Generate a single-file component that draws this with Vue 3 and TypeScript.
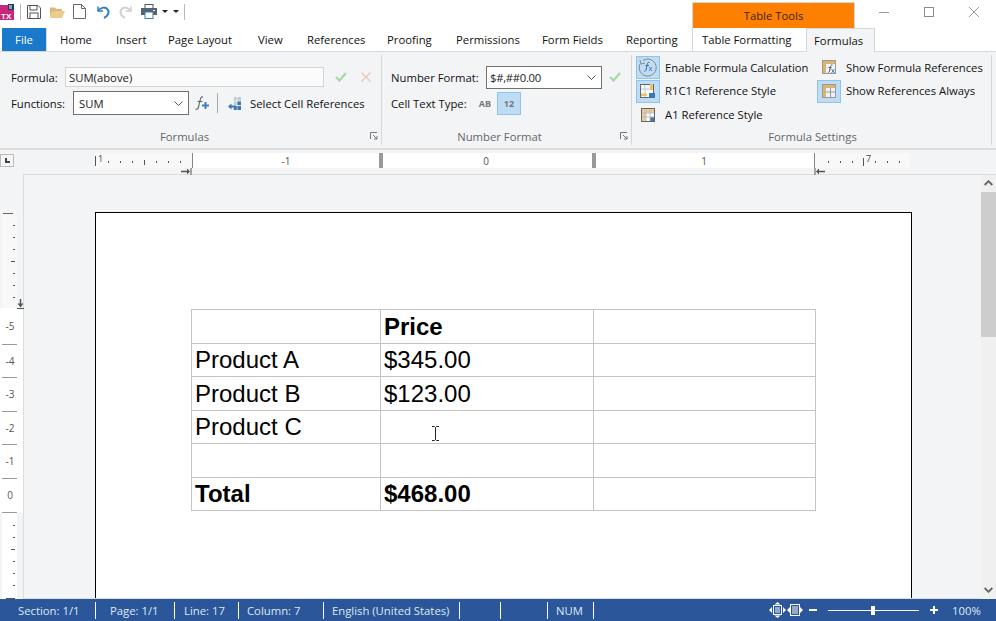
<script setup lang="ts">
const tabs = [
  { label: 'Home', w: 56 }, { label: 'Insert', w: 52 }, { label: 'Page Layout', w: 90 },
  { label: 'View', w: 49 }, { label: 'References', w: 80 }, { label: 'Proofing', w: 69 },
  { label: 'Permissions', w: 86 }, { label: 'Form Fields', w: 84 }, { label: 'Reporting', w: 78 },
]
const rows = [
  { a: '', b: 'Price', bold: true },
  { a: 'Product A', b: '$345.00', bold: false },
  { a: 'Product B', b: '$123.00', bold: false },
  { a: 'Product C', b: '', bold: false },
  { a: '', b: '', bold: false },
  { a: 'Total', b: '$468.00', bold: true },
]
const hTicks = [
  { x: 13, h: 2 }, { x: 25, h: 2 }, { x: 37, h: 2 }, { x: 49, h: 5 }, { x: 61, h: 2 }, { x: 73, h: 2 }, { x: 85, h: 2 },
]
const hTicksR = [
  { x: 13, h: 2 }, { x: 25, h: 2 }, { x: 37, h: 2 }, { x: 48, h: 8 }, { x: 60, h: 2 }, { x: 72, h: 2 }, { x: 84, h: 2 },
]
const vTop = [12, 24, 36, 48, 60, 72, 84]
const vBottom = [12, 24, 36, 48, 60, 72, 85]
const vNums = [
  { n: '-5', h: 37 }, { n: '-4', h: 33 }, { n: '-3', h: 34 }, { n: '-2', h: 33 }, { n: '-1', h: 34 }, { n: '0', h: 34 },
]
const status = [
  { t: 'Section: 1/1', w: 96, p: 18 }, { t: 'Page: 1/1', w: 79, p: 14 }, { t: 'Line: 17', w: 64, p: 9 },
  { t: 'Column: 7', w: 85, p: 8 }, { t: 'English (United States)', w: 136, p: 8 }, { t: '', w: 41, p: 0 },
  { t: '', w: 47, p: 0 }, { t: 'NUM', w: 46, p: 8 },
]
</script>

<template>
  <div class="app">
    <header class="titlebar">
      <div class="qat">
        <svg class="logo" width="14" height="16" viewBox="0 0 14 16">
          <path d="M0 1h9v2h5v13H0z" fill="#c8287a" />
          <rect x="8" y="0" width="6" height="6" fill="#1f3f6b" />
          <path d="M9 2h3M9 4h3" stroke="#fff" stroke-width="1" />
          <text x="1" y="14.500" font-size="8" font-weight="700" fill="#fff" font-family="Liberation Sans, sans-serif">TX</text>
        </svg>
        <span class="qsep first"></span>
        <svg width="14" height="14" viewBox="0 0 14 14" class="qi i-save"><path d="M.5.5h10.500l2.500 2.500v10.500H.5z" fill="none" stroke="#555" /><path d="M3 1v4h7V1" fill="none" stroke="#555" /><rect x="3" y="8" width="8" height="5.500" fill="none" stroke="#555" /></svg>
        <svg width="15" height="12" viewBox="0 0 15 12" class="qi i-open"><path d="M0 1.500h5l1 1.500h6v2H3L0 11z" fill="#d8b878" /><path d="M3 5h12l-3 7H0z" fill="#eccb8e" /></svg>
        <svg width="13" height="15" viewBox="0 0 13 15" class="qi i-new"><path d="M.5.500h8l4 4v10H.5zM8.500.500v4h4" fill="#fff" stroke="#666" /></svg>
        <svg width="14" height="14" viewBox="0 0 14 14" class="qi i-undo"><path d="M2 1.500v4.500h5" fill="none" stroke="#2e7fc4" stroke-width="1.500" /><path d="M2.500 5.500C5 2 10 1.500 12 5c1.500 3-.5 6.500-4 8" fill="none" stroke="#2e7fc4" stroke-width="2" /></svg>
        <svg width="14" height="14" viewBox="0 0 14 14" class="qi i-redo"><path d="M12 1.500v4.500h-5" fill="none" stroke="#cfcfcf" stroke-width="1.500" /><path d="M11.500 5.500C9 2 4 1.500 2 5c-1.500 3 .5 6.500 4 8" fill="none" stroke="#cfcfcf" stroke-width="2" /></svg>
        <svg width="16" height="15" viewBox="0 0 16 15" class="qi i-print"><rect x="4" y=".5" width="8" height="4" fill="#fff" stroke="#555" /><rect x="0" y="4" width="16" height="7" fill="#55626f" /><rect x="4" y="8" width="8" height="6.500" fill="#fff" stroke="#3b7db8" /><rect x="12" y="6" width="2" height="1" fill="#fff" /></svg>
        <span class="caret"></span>
        <span class="caret"></span>
        <span class="qsep"></span>
      </div>
      <div class="context">Table Tools</div>
      <div class="winbtns">
        <svg width="10" height="10" viewBox="0 0 10 10"><path d="M0 5.500h10" stroke="#9a9a9a" /></svg>
        <svg width="10" height="10" viewBox="0 0 10 10"><rect x=".5" y=".5" width="9" height="9" fill="none" stroke="#8c8c8c" /></svg>
        <svg width="10" height="10" viewBox="0 0 10 10"><path d="M0 0l10 10M10 0L0 10" stroke="#9a9a9a" /></svg>
      </div>
    </header>

    <nav class="tabs">
      <div class="tab file">File</div>
      <div v-for="t in tabs" :key="t.label" class="tab" :style="{ width: t.w + 'px' }">{{ t.label }}</div>
      <div class="tab ctx">Table Formatting</div>
      <div class="tab active">Formulas</div>
    </nav>

    <section class="ribbon">
      <div class="group g1">
        <div class="gbody">
          <div class="grow r1">
            <span class="lbl l-formula">Formula:</span>
            <div class="fbox"><span>SUM(above)</span></div>
            <svg class="ok" width="12" height="10" viewBox="0 0 12 10"><path d="M1 5l3.500 3.500L11 1" fill="none" stroke="#a8d8a8" stroke-width="2.200" /></svg>
            <svg class="no" width="10" height="10" viewBox="0 0 10 10"><path d="M.5.500l9 9M9.500.500l-9 9" stroke="#eec4b4" stroke-width="1.300" /></svg>
          </div>
          <div class="grow r2">
            <span class="lbl l-func">Functions:</span>
            <div class="combo c-func"><span>SUM</span>
              <svg width="9" height="5" viewBox="0 0 9 5"><path d="M.5.500l4 4 4-4" fill="none" stroke="#555" /></svg>
            </div>
            <svg class="fplus" width="15" height="14" viewBox="0 0 15 14">
              <path d="M8 1C6 .5 5.500 2 5 5L3.500 11C3 13 2 13.500 .5 13M2.500 5.500h5" fill="none" stroke="#666" stroke-width="1.100" />
              <path d="M7 9.500h7M10.500 6v7" stroke="#3d7fc0" stroke-width="2" />
            </svg>
            <span class="vsep"></span>
            <svg class="cellref" width="13" height="13" viewBox="0 0 13 13">
              <rect x="5" y="0" width="8" height="13" fill="#c3cad2" />
              <path d="M5.500 0v13M9 0v13M5 4h8M5 8.500h8" stroke="#f3f4f6" stroke-width=".8" />
              <path d="M9.500 4.500h3.500v3.500H9.500zM5.800 8.900h3v4h-3zM9.500 8.900H13v4H9.500z" fill="#3d78b5" />
              <path d="M2 9.500h6" stroke="#3d78b5" stroke-width="2" /><path d="M3.500 6.500v6L0 9.500z" fill="#3d78b5" />
            </svg>
            <span class="lbl l-sel">Select Cell References</span>
          </div>
        </div>
        <div class="gtitle">Formulas
          <svg class="launch" width="8" height="8" viewBox="0 0 8 8"><path d="M.5 7V.5H7M3 3l4 4M7 4v3H4" fill="none" stroke="#777" /></svg>
        </div>
      </div>

      <div class="group g2">
        <div class="gbody">
          <div class="grow r1">
            <span class="lbl l-num">Number Format:</span>
            <div class="combo c-num"><span>$#,##0.00</span>
              <svg width="9" height="5" viewBox="0 0 9 5"><path d="M.5.500l4 4 4-4" fill="none" stroke="#555" /></svg>
            </div>
            <svg class="ok2" width="12" height="10" viewBox="0 0 12 10"><path d="M1 5l3.500 3.500L11 1" fill="none" stroke="#a8d8a8" stroke-width="2.200" /></svg>
          </div>
          <div class="grow r2">
            <span class="lbl l-cell">Cell Text Type:</span>
            <span class="ttype ab">AB</span>
            <span class="ttype on">12</span>
          </div>
        </div>
        <div class="gtitle">Number Format
          <svg class="launch" width="8" height="8" viewBox="0 0 8 8"><path d="M.5 7V.5H7M3 3l4 4M7 4v3H4" fill="none" stroke="#777" /></svg>
        </div>
      </div>

      <div class="group g3">
        <div class="sets">
          <div class="setcol one">
            <div class="setrow">
              <span class="ibtn on">
                <svg width="20" height="20" viewBox="0 0 20 20"><path d="M5 3.500A8.500 8.500 0 1 1 2 7" fill="none" stroke="#888" /><path d="M2 3l1 4 4-1" fill="none" stroke="#888" /><path d="M11.500 5.500C10 5 9.500 6 9 8l-1 5c-.3 1-1 1.500-1.800 1.200M7.500 8.500h3.500" fill="none" stroke="#4a6a8a" /><path d="M11 10l3 4M14 10l-3 4" stroke="#3d85c6" /></svg>
              </span>
              <span class="lbl">Enable Formula Calculation</span>
            </div>
            <div class="setrow">
              <span class="ibtn on">
                <svg width="16" height="16" viewBox="0 0 16 16"><rect x=".5" y="1.500" width="13" height="13" fill="#f8f8f8" stroke="#666" /><path d="M5 2v12M1 6h12" stroke="#c8c8c8" /><rect x="9" y="10" width="6" height="5" fill="#3d78b5" /><path d="M1 10.500h6v2.500H1zM10 1h3v6h-3z" fill="#ecc370" /></svg>
              </span>
              <span class="lbl">R1C1 Reference Style</span>
            </div>
            <div class="setrow">
              <span class="ibtn">
                <svg width="14" height="14" viewBox="0 0 14 14"><rect x=".5" y=".5" width="13" height="13" fill="#fff" stroke="#666" /><path d="M1 1h4v4H1zM5 1h4v4H5zM9 1h4v4H9zM1 5h4v4H1zM1 9h4v4H1z" fill="#e8cd96" /><rect x="9" y="9" width="4" height="4" fill="#3d78b5" /><path d="M5 1v12M9 1v12M1 5h12M1 9h12" stroke="#bbb" /></svg>
              </span>
              <span class="lbl">A1 Reference Style</span>
            </div>
          </div>
          <div class="setcol">
            <div class="setrow">
              <span class="ibtn">
                <svg width="14" height="14" viewBox="0 0 14 14"><rect x=".5" y=".5" width="13" height="13" fill="#f4f4f4" stroke="#999" /><path d="M1 1h12v3H1zM1 1h3v12H1z" fill="#d9b56e" /><path d="M10.500 5C9 4.700 8.500 6 8.200 8l-.6 3c-.2 1-.8 1.500-1.600 1.300M6.500 7.500h3" fill="none" stroke="#555" /><path d="M9.500 9l3 4M12.500 9l-3 4" stroke="#3d85c6" /></svg>
              </span>
              <span class="lbl">Show Formula References</span>
            </div>
            <div class="setrow">
              <span class="ibtn on">
                <svg width="14" height="14" viewBox="0 0 14 14"><rect x=".5" y=".5" width="13" height="13" fill="#eef3f8" stroke="#999" /><path d="M1 1h12v3H1zM1 1h3v12H1z" fill="#d9b56e" /><path d="M4 8h9M8.500 4v9" stroke="#999" /></svg>
              </span>
              <span class="lbl">Show References Always</span>
            </div>
          </div>
        </div>
        <div class="gtitle">Formula Settings</div>
      </div>
    </section>

    <div class="hruler">
      <span class="corner"><i></i></span>
      <div class="hband">
        <div class="hmargin left">
          <b class="hbar"></b><em class="num1">1</em>
          <i v-for="t in hTicks" :key="t.x" :style="{ left: t.x + 'px', height: t.h + 'px', top: (9 - t.h / 2) + 'px' }"></i>
        </div>
        <div class="hcell c1"><span>-1</span></div>
        <div class="hcell c2"><span>0</span></div>
        <div class="hcell c3"><span>1</span></div>
        <div class="hmargin right">
          <em class="num7">7</em>
          <i v-for="t in hTicksR" :key="t.x" :style="{ left: t.x + 'px', height: t.h + 'px', top: (9 - t.h / 2) + 'px' }"></i>
        </div>
        <svg class="indent il" width="11" height="7" viewBox="0 0 11 7"><path d="M0 3.500h8" stroke="#555" stroke-width="1.500" /><path d="M6 .5l3 3-3 3z" fill="#555" /><path d="M10 0v7" stroke="#555" /></svg>
        <svg class="indent ir" width="11" height="7" viewBox="0 0 11 7"><path d="M11 3.500H3" stroke="#555" stroke-width="1.500" /><path d="M5 .5l-3 3 3 3z" fill="#555" /><path d="M1 0v7" stroke="#555" /></svg>
      </div>
    </div>

    <main class="work">
      <aside class="vruler">
        <div class="vband top">
          <i class="vlong first"></i>
          <i v-for="(y, n) in vTop" :key="y" :class="{ mid: n === 3 }" :style="{ top: y + 'px' }"></i>
          <svg class="vmark" width="7" height="10" viewBox="0 0 7 10"><path d="M3.500 0v6" stroke="#555" stroke-width="1.500" /><path d="M.5 4.500h6l-3 4z" fill="#555" /><path d="M0 9.500h7" stroke="#555" /></svg>
        </div>
        <div class="vnums">
          <div v-for="v in vNums" :key="v.n" class="vnum" :style="{ height: v.h + 'px' }"><span>{{ v.n }}</span></div>
        </div>
        <div class="vband bottom">
          <i v-for="(y, n) in vBottom" :key="y" :class="{ mid: n === 2, last: n === 6 }" :style="{ top: y + 'px' }"></i>
        </div>
      </aside>

      <div class="canvas">
        <div class="page">
          <table class="doc">
            <colgroup><col class="col1" /><col class="col2" /><col class="col3" /></colgroup>
            <tbody>
              <tr v-for="(r, i) in rows" :key="i" :class="{ bold: r.bold }">
                <td>{{ r.a }}</td><td>{{ r.b }}</td><td></td>
              </tr>
            </tbody>
          </table>
          <svg class="ibeam" width="7" height="15" viewBox="0 0 7 15"><path d="M0 .5h2.500l1 1 1-1H7M3.500 1.500v12M0 14.500h2.500l1-1 1 1H7" fill="none" stroke="#222" /></svg>
        </div>
      </div>

      <div class="scroll">
        <svg width="9" height="6" viewBox="0 0 9 6" class="arrow up"><path d="M.7 5L4.500 1.200 8.300 5" fill="none" stroke="#606060" stroke-width="1.800" /></svg>
        <div class="track"><div class="thumb"></div></div>
        <svg width="9" height="6" viewBox="0 0 9 6" class="arrow"><path d="M.7 1L4.500 4.800 8.300 1" fill="none" stroke="#606060" stroke-width="1.800" /></svg>
      </div>
    </main>

    <footer class="status">
      <div v-for="(s, i) in status" :key="i" class="sitem" :style="{ width: s.w + 'px', paddingLeft: s.p + 'px' }">{{ s.t }}</div>
      <div class="sright">
        <svg width="17" height="16" viewBox="0 0 17 16"><path d="M0 8l3-3v6zM17 8l-3-3v6zM8.500 0l3 2.500h-6zM8.500 16l3-2.500h-6z" fill="#fff" /><rect x="4.500" y="3.500" width="8" height="9" fill="none" stroke="#fff" /><path d="M6 6h5M6 8h5M6 10h5" stroke="#fff" /></svg>
        <svg class="z2" width="16" height="12" viewBox="0 0 16 12"><path d="M0 6l3-3v6zM16 6l-3-3v6z" fill="#fff" /><rect x="3.500" y=".5" width="9" height="11" fill="none" stroke="#fff" /><path d="M5 3h6M5 5h6M5 7h6M5 9h6" stroke="#fff" /></svg>
        <span class="zminus"></span>
        <div class="zslider"><span class="zthumb"></span></div>
        <span class="zplus"></span>
        <span class="zpct">100%</span>
      </div>
    </footer>
  </div>
</template>

<style scoped>
.app {
  width: 996px;
  height: 621px;
  display: flex;
  flex-direction: column;
  overflow: hidden;
  background: #fff;
  font-family: "Open Sans", "Noto Sans", sans-serif;
  font-size: 11.3px;
  color: #1a1a1a;
}
.titlebar { height: 28px; display: flex; flex: none; }
.qat { width: 692px; display: flex; align-items: center; padding-bottom: 5px; box-sizing: border-box; }
.qsep { width: 1px; height: 16px; background: #b8b8b8; margin-left: 5px; }
.qsep.first { margin-left: 6px; }
.i-save { margin-left: 6px; }
.i-open { margin-left: 9px; }
.i-new { margin-left: 8px; }
.i-undo { margin-left: 10px; }
.i-redo { margin-left: 9px; }
.i-print { margin-left: 8px; }
.caret { width: 0; height: 0; border: 3px solid transparent; border-top: 3px solid #222; border-bottom: 0; margin-left: 5px; }
.caret + .caret { margin-left: 5px; }
.context {
  width: 163px; height: 26px; margin-top: 2px; box-sizing: border-box;
  background: #ff8000; border: 1px solid #d6d6d6; border-bottom: 0;
  display: flex; align-items: center; justify-content: center;
  color: #3a2200;
}
.winbtns { flex: 1; display: flex; align-items: flex-start; padding: 7px 0 0 24px; gap: 35px; }

.tabs { height: 24px; display: flex; flex: none; border-bottom: 1px solid #d8d8d8; box-sizing: border-box; padding-left: 2px; }
.tab { display: flex; align-items: center; padding-left: 12px; box-sizing: border-box; color: #111; padding-bottom: 1px; white-space: nowrap; }
.tab.file {
  width: 44px; padding: 0 0 1px 0; margin-right: 2px; justify-content: center;
  height: 23px; background: #1979ca; color: #fff; box-shadow: 1px 0 0 #d8d8d8;
}
.tab.ctx { width: 114px; padding-left: 9px; border-left: 1px solid #d6d6d6; }
.tab.active {
  width: 69px; padding-left: 7px; height: 24px; background: #f3f4f6;
  border: 1px solid #d6d6d6; border-bottom: 0;
}

.ribbon {
  height: 98px; flex: none; display: flex; background: #f3f4f6;
  border-bottom: 2px solid #dcdcdc; box-sizing: border-box; padding: 3px 4px 3px 0;
}
.group { display: flex; flex-direction: column; border-right: 1px solid #d6d6d6; box-sizing: border-box; position: relative; }
.g1 { width: 382px; }
.g2 { width: 250px; }
.g3 { flex: 1; }
.gbody { flex: 1; padding-top: 9px; }
.grow { display: flex; align-items: center; height: 26px; }
.grow .lbl, .combo span, .fbox span { padding-top: 1px; }
.lbl { white-space: nowrap; color: #111; }
.l-formula { margin-left: 11px; width: 54px; }
.fbox { width: 259px; height: 20px; border: 1px solid #d4d4d4; background: #fbfbfb; box-sizing: border-box; padding-left: 3px; display: flex; align-items: center; }
.ok { margin-left: 11px; }
.no { margin-left: 14px; }
.l-func { margin-left: 11px; width: 62px; }
.combo { border: 1px solid #707070; background: #fff; box-sizing: border-box; display: flex; align-items: center; justify-content: space-between; padding: 0 5px; }
.c-func { width: 116px; height: 24px; }
.fplus { margin-left: 6px; }
.vsep { width: 1px; height: 20px; background: #aaa; margin-left: 7px; }
.cellref { margin-left: 10px; }
.l-sel { margin-left: 9px; }
.g2 .gbody { padding-left: 9px; }
.l-num { width: 95px; }
.c-num { width: 116px; height: 23px; padding-left: 3px; letter-spacing: -0.3px; }
.ok2 { margin-left: 7px; }
.l-cell { width: 86px; }
.ttype { width: 24px; height: 23px; box-sizing: border-box; display: flex; align-items: center; justify-content: center; font-size: 9px; font-weight: 700; color: #777; }
.ttype.ab { margin-left: -4px; }
.ttype.on { background: #bfdcf5; border: 1px solid #8fc3f0; }
.gtitle { height: 20px; flex: none; display: flex; align-items: center; justify-content: center; color: #666; box-sizing: border-box; margin-bottom: -2px; padding-bottom: 1px; }
.g1 .gtitle { padding-right: 12px; }
.g2 .gtitle { padding-right: 14px; }
.g3 .gtitle { padding-left: 2px; }
.launch { position: absolute; right: 3px; bottom: 5px; }
.sets { flex: 1; display: flex; padding-left: 4px; min-height: 0; }
.setcol { display: flex; flex-direction: column; }
.setcol.one { width: 181px; }
.setrow { display: flex; align-items: center; height: 24px; gap: 5px; }
.setrow + .setrow .lbl { padding-bottom: 2px; }
.ibtn { width: 24px; height: 23px; box-sizing: border-box; display: flex; align-items: center; justify-content: center; border: 1px solid transparent; flex: none; }
.ibtn.on { background: #bfdcf5; border-color: #8fc3f0; }

.hruler { height: 24px; flex: none; display: flex; background: #f3f4f6; box-sizing: border-box; position: relative; }
.corner { width: 14px; height: 13px; border: 1px solid #bbb; box-sizing: border-box; margin: 4px 0 0 0; position: relative; background: #f6f6f6; }
.corner i { position: absolute; left: 4px; top: 3px; width: 5px; height: 5px; border-left: 2px solid #444; border-bottom: 2px solid #444; box-sizing: border-box; }
.hband { display: flex; margin: 3px 0 0 81px; height: 15px; position: relative; }
.hmargin { width: 97px; background: #f8f8f9; position: relative; }
.hmargin.right { width: 95px; }
.hmargin i { position: absolute; width: 1px; background: #555; }
.hbar { position: absolute; left: 0; top: 3px; width: 1px; height: 10px; background: #555; }
.num1, .num7 { position: absolute; top: -1px; font-size: 9px; font-style: normal; color: #444; }
.num1 { left: 3px; }
.num7 { left: 51px; }
.hcell { background: #fff; display: flex; align-items: center; justify-content: center; color: #555; font-size: 10px; box-sizing: border-box; border-left: 1px solid #888; padding-top: 1px; }
.c1 { width: 187px; }
.c2 { width: 213px; border-left: 4px solid #999; padding-right: 3px; }
.c3 { width: 223px; border-left: 4px solid #999; border-right: 1px solid #888; padding-right: 2px; }
.indent { position: absolute; top: 15px; }
.il { left: 86px; }
.ir { left: 719px; }

.work { flex: 1; min-height: 0; display: flex; }
.vruler { width: 23px; flex: none; background: #f3f4f6; display: flex; flex-direction: column; padding-top: 39px; box-sizing: border-box; }
.vband { position: relative; width: 15px; margin-left: 2px; background: #f8f8f9; }
.vband.top { height: 95px; flex: none; }
.vband.bottom { flex: 1; background: #fff; }
.vband i { position: absolute; left: 11px; width: 2px; height: 1px; background: #555; }
.vband i.mid { left: 9px; width: 4px; }
.vband i.last { left: 4px; width: 9px; }
.vlong.first { left: 1px; top: 0; width: 10px; background: #666; }
.vmark { position: absolute; left: 15px; top: 86px; }
.vnums { background: #fff; width: 23px; flex: none; }
.vnum { box-sizing: border-box; display: flex; align-items: center; justify-content: center; font-size: 10px; color: #555; padding: 0 3px 2px 0; position: relative; }
.vnum::after { content: ""; position: absolute; left: 2px; bottom: 0; width: 15px; height: 1px; background: #999; }
.canvas { flex: 1; min-width: 0; background: #f3f4f6; border-left: 1px solid #dcdcdc; border-top: 1px solid #dcdcdc; border-bottom: 1px solid #dcdcdc; padding: 37px 0 0 71px; box-sizing: border-box; overflow: hidden; }
.page { width: 817px; height: 400px; background: #fff; border: 1px solid #000; box-sizing: border-box; padding: 96px 0 0 95px; position: relative; }
.doc { border-collapse: collapse; table-layout: fixed; width: 624px; font-family: "Liberation Sans", Arial, sans-serif; font-size: 24px; color: #000; }
.col1 { width: 189px; }
.col2 { width: 213px; }
.col3 { width: 222px; }
.doc td { border: 1px solid #c4c4c4; padding: 0 3px; box-sizing: border-box; line-height: 28px; }
.doc tr:nth-child(odd) td { height: 34px; }
.doc tr:nth-child(even) td { height: 33px; }
.doc tr.bold td { font-weight: 700; }
.ibeam { position: absolute; left: 336px; top: 213px; }
.scroll { width: 15px; flex: none; background: #f0f0f0; display: flex; flex-direction: column; align-items: center; border-top: 1px solid #dcdcdc; box-sizing: border-box; }
.arrow { margin: 6px 0; flex: none; }
.arrow.up { margin: 5px 0 6px; }
.track { flex: 1; width: 100%; }
.thumb { width: 100%; height: 145px; background: #cdcdcd; }

.status { height: 22px; flex: none; background: #2b579a; color: #dfe7f2; display: flex; align-items: center; }
.sitem { height: 17px; border-right: 1px solid #fff; box-sizing: border-box; display: flex; align-items: center; white-space: nowrap; }
.sright { flex: 1; display: flex; align-items: center; padding-left: 175px; }
.z2 { margin-left: 1px; }
.zminus { width: 8px; height: 2px; background: #fff; margin-left: 6px; }
.zslider { width: 91px; height: 1px; background: #fff; margin-left: 11px; position: relative; }
.zthumb { position: absolute; left: 43px; top: -4px; width: 4px; height: 9px; background: #fff; }
.zplus { width: 8px; height: 8px; margin-left: 11px; background: linear-gradient(#fff, #fff) center / 8px 2px no-repeat, linear-gradient(#fff, #fff) center / 2px 8px no-repeat; }
.zpct { margin-left: 14px; }
</style>
